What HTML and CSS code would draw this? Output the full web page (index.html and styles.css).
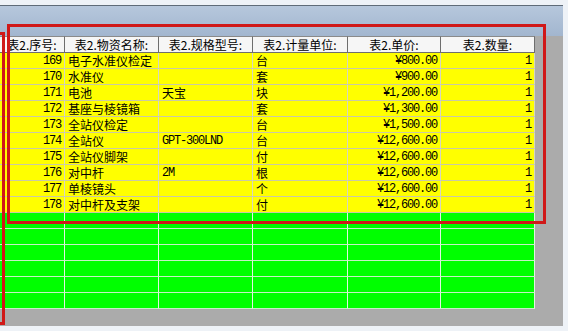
FILE: index.html
```html
<!DOCTYPE html>
<html>
<head>
<meta charset="utf-8">
<link rel="stylesheet" href="styles.css">
</head>
<body>
<div class="window">
  <div class="panel">
    <div class="band"></div>
    <div class="content">
      <div class="grid">
        <div class="row head">
          <div class="c">表2.序号:</div>
          <div class="c">表2.物资名称:</div>
          <div class="c">表2.规格型号:</div>
          <div class="c">表2.计量单位:</div>
          <div class="c">表2.单价:</div>
          <div class="c">表2.数量:</div>
        </div>
        <div class="row y"><div class="c r">169</div><div class="c">电子水准仪检定</div><div class="c"></div><div class="c">台</div><div class="c r">¥800.00</div><div class="c r">1</div></div>
        <div class="row y"><div class="c r">170</div><div class="c">水准仪</div><div class="c"></div><div class="c">套</div><div class="c r">¥900.00</div><div class="c r">1</div></div>
        <div class="row y"><div class="c r">171</div><div class="c">电池</div><div class="c">天宝</div><div class="c">块</div><div class="c r">¥1,200.00</div><div class="c r">1</div></div>
        <div class="row y"><div class="c r">172</div><div class="c">基座与棱镜箱</div><div class="c"></div><div class="c">套</div><div class="c r">¥1,300.00</div><div class="c r">1</div></div>
        <div class="row y"><div class="c r">173</div><div class="c">全站仪检定</div><div class="c"></div><div class="c">台</div><div class="c r">¥1,500.00</div><div class="c r">1</div></div>
        <div class="row y"><div class="c r">174</div><div class="c">全站仪</div><div class="c mono">GPT-300LND</div><div class="c">台</div><div class="c r">¥12,600.00</div><div class="c r">1</div></div>
        <div class="row y"><div class="c r">175</div><div class="c">全站仪脚架</div><div class="c"></div><div class="c">付</div><div class="c r">¥12,600.00</div><div class="c r">1</div></div>
        <div class="row y"><div class="c r">176</div><div class="c">对中杆</div><div class="c mono">2M</div><div class="c">根</div><div class="c r">¥12,600.00</div><div class="c r">1</div></div>
        <div class="row y"><div class="c r">177</div><div class="c">单棱镜头</div><div class="c"></div><div class="c">个</div><div class="c r">¥12,600.00</div><div class="c r">1</div></div>
        <div class="row y"><div class="c r">178</div><div class="c">对中杆及支架</div><div class="c"></div><div class="c">付</div><div class="c r">¥12,600.00</div><div class="c r">1</div></div>
        <div class="row g"><div class="c"></div><div class="c"></div><div class="c"></div><div class="c"></div><div class="c"></div><div class="c"></div></div>
        <div class="row g"><div class="c"></div><div class="c"></div><div class="c"></div><div class="c"></div><div class="c"></div><div class="c"></div></div>
        <div class="row g"><div class="c"></div><div class="c"></div><div class="c"></div><div class="c"></div><div class="c"></div><div class="c"></div></div>
        <div class="row g"><div class="c"></div><div class="c"></div><div class="c"></div><div class="c"></div><div class="c"></div><div class="c"></div></div>
        <div class="row g"><div class="c"></div><div class="c"></div><div class="c"></div><div class="c"></div><div class="c"></div><div class="c"></div></div>
        <div class="row g"><div class="c"></div><div class="c"></div><div class="c"></div><div class="c"></div><div class="c"></div><div class="c"></div></div>
      </div>
    </div>
  </div>
  <div class="mark mark-main"></div>
  <div class="mark mark-left"></div>
</div>
</body>
</html>
```
FILE: styles.css
```css
html, body {
  margin: 0;
  padding: 0;
  background: #eef2f7;
  overflow: hidden;
}
.window {
  position: relative;
  width: 568px;
  height: 331px;
  padding-top: 5px;
  box-sizing: border-box;
  font-family: "Noto Sans CJK SC", "Liberation Sans", sans-serif;
  font-size: 12px;
  color: #000;
}
.panel {
  width: 563px;
  height: 321px;
  border-top: 1px solid #5f6b78;
  box-sizing: border-box;
  display: flex;
  flex-direction: column;
  background: #ababab;
}
.band {
  height: 30px;
  background: linear-gradient(#b6c7dc, #a2b6cf);
  flex: none;
}
.content {
  flex: 1;
  display: flex;
}
.grid {
  width: 535px;
  display: flex;
  flex-direction: column;
}
.row {
  display: grid;
  grid-template-columns: 65px 94px 94px 95px 93px 94px;
  height: 16px;
}
.c {
  box-sizing: border-box;
  height: 16px;
  line-height: 15px;
  padding: 0 3px;
  white-space: nowrap;
  overflow: hidden;
  border-right: 1px solid;
  border-bottom: 1px solid;
}
.r, .mono {
  font-family: "Liberation Mono", "DejaVu Sans Mono", monospace;
  font-size: 12px;
  letter-spacing: -1.2px;
  padding-top: 1px;
}
.r { text-align: right; padding-right: 3px; }
.head { height: 17px; }
.head .c {
  height: 17px;
  line-height: 16px;
  background: #f6f6f6;
  border-color: #6e6e6e;
  border-top: 1px solid #8a8a8a;
  text-align: center;
  padding: 0;
}
.y .c {
  background: #ffff00;
  border-right-color: #d6d6c0;
  border-bottom-color: #c9c9a6;
}
.g .c {
  background: #00ff00;
  border-right-color: #e2f4e2;
  border-bottom-color: #c6f0c6;
}
.mark {
  position: absolute;
  border: 3px solid #d01818;
  box-sizing: border-box;
}
.mark-main {
  left: 7px;
  top: 24px;
  width: 539px;
  height: 200px;
}
.mark-left {
  left: -20px;
  top: 32px;
  width: 25px;
  height: 293px;
}
```
